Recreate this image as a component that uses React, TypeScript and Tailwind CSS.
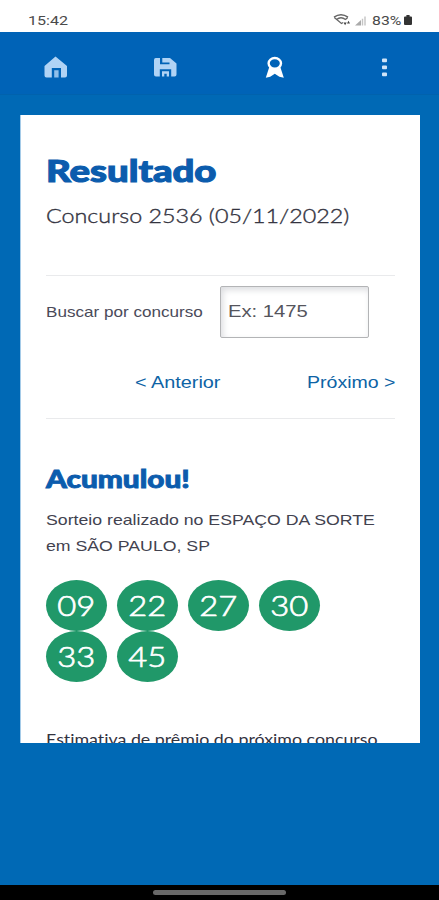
import clsx from "clsx";

const numbers = ["09", "22", "27", "30", "33", "45"];

// Text drawn wider than the font's natural proportions
function Wide({ className, children }: { className?: string; children: React.ReactNode }) {
  return <span className={clsx("inline-block origin-left whitespace-nowrap", className)}>{children}</span>;
}

function StatusBar() {
  return (
    <div className="flex h-[32px] shrink-0 items-start bg-white pt-[12px] font-['Roboto',sans-serif] text-[13.5px] leading-[17px] text-[#4a4a4a]">
      <Wide className="ml-[28px] w-[305px] scale-x-[1.19]">15:42</Wide>
      {/* Wifi, signal */}
      <svg className="mt-[1px] h-[14px] w-[18px] shrink-0" viewBox="0 0 18 14" fill="none" stroke="#666">
        <path d="M1 4.2Q8 -.8 15 4.2" strokeWidth="1.5" />
        <path d="M3.5 6.5Q8 3 12.5 6.5" strokeWidth="1.3" />
        <path d="M1.3 4.5 8.5 10.5 10 9.4M14.7 4.5l-2.5 2.2" strokeWidth="1.3" />
        <path d="M10.5 9.5h3.2l-1.6 2.7zM14 10.5h3l-1.5-2.7z" fill="#444" stroke="none" />
      </svg>
      <svg className="mt-[2px] ml-[3px] h-[12px] w-[13px] shrink-0" viewBox="0 0 13 12">
        <path d="M1 11.5 7 6v5.5z" fill="#aaa" />
        <path d="M8.5 11.5V4.7M11 11.5V2.5" stroke="#c4c4c4" strokeWidth="1.4" />
      </svg>
      <Wide className="ml-[5px] w-[31px] scale-x-[1.17]">83%</Wide>
      <svg className="mt-[3px] ml-[1px] h-[10px] w-[8px] shrink-0" viewBox="0 0 8 10" fill="#333">
        <path d="M2.4 0h3.2v1.5H7q1 0 1 1V9q0 1-1 1H1Q0 10 0 9V2.5q0-1 1-1h1.4z" />
      </svg>
    </div>
  );
}

function Toolbar() {
  return (
    <nav className="grid h-[63px] shrink-0 grid-cols-4 border-b border-[#0162ad] bg-[#0063b7] pt-[24px]">
      <svg className="mx-auto h-[22px] w-[24px] translate-x-[0.5px]" viewBox="0 0 24 22" fill="#b0d3f5">
        <path d="M12 0.5 23.5 10v9.5q0 2-2 2H17.5V12H8.3V21.5H3q-2 0-2-2V10z" />
        <path d="M10.7 14.2h4.4v7.3h-4.4z" fill="#8fbfea" />
      </svg>
      <svg className="mx-auto h-[22px] w-[24px]" viewBox="0 0 24 22" fill="#b0d3f5">
        <path d="M2.8 2H7v6.2h9.5V6.5H9.3V2H17l6.5 5.5v11q0 2-2 2h-3.3V13.2H6.8v7.3H3q-2 0-2-2V4q0-2 1.8-2z" />
        <path d="M9 15.2h7v5.3h-2.3v-2.7h-2.4v2.7H9z" />
      </svg>
      <svg className="mx-auto h-[22px] w-[20px] translate-x-[1px]" viewBox="0 0 20 22" fill="none">
        <path d="M4.3 11 .8 21.7l4.4-1 4.6-3 4.6 3 4.4 1L15.3 11z" fill="#fff" />
        <ellipse cx="9.8" cy="7.3" rx="6.2" ry="5.3" fill="#0063b7" stroke="#fff" strokeWidth="2.4" />
      </svg>
      <svg className="mx-auto h-[22px] w-[6px] translate-x-[0.5px]" viewBox="0 0 6 22" fill="#cfe4f8">
        <rect x=".5" y="2.5" width="5" height="3.8" rx="1" />
        <rect x=".5" y="9.5" width="5" height="3.8" rx="1" />
        <rect x=".5" y="16.5" width="5" height="3.8" rx="1" />
      </svg>
    </nav>
  );
}

function Search() {
  return (
    <section className="h-[144px] border-y border-[#e9eaec]">
      <div className="flex items-center pt-[10px]">
        <Wide className="w-[174px] scale-x-[1.14] text-[15px] text-[#4a4a59]">Buscar por concurso</Wide>
        <div className="flex h-[52px] w-[149px] shrink-0 items-center rounded-[2px] border border-[#b3b4b6] bg-white pl-[7px] shadow-[inset_2px_3px_6px_#dcdde0]">
          <Wide className="scale-x-[1.19] text-[17px] text-[#55555c]">Ex: 1475</Wide>
        </div>
      </div>
      <div className="flex pt-[33px] pl-[89px] text-[16px] leading-[24px] text-[#0d63a5]">
        <Wide className="w-[172px] scale-x-[1.24]">&lt; Anterior</Wide>
        <Wide className="scale-x-[1.22]">Próximo &gt;</Wide>
      </div>
    </section>
  );
}

function Balls() {
  return (
    <ul className="mt-[21px] flex w-[290px] flex-wrap gap-x-[10px]">
      {numbers.map((number) => (
        <li key={number} className="flex h-[51px] w-[61px] items-center justify-center rounded-[50%] bg-[#209869] pb-[2px] font-['Lato',sans-serif] text-[28px] font-light text-white">
          <span className="scale-x-[1.17] [-webkit-text-stroke:0.7px]">{number}</span>
        </li>
      ))}
    </ul>
  );
}

export default function App() {
  return (
    <div className="flex h-[900px] w-[439px] flex-col overflow-hidden bg-[#0069b5] font-['Liberation_Sans',Arial,sans-serif]">
      <StatusBar />
      <Toolbar />
      <main className="mx-[20px] mt-[20px] h-[628px] w-[400px] shrink-0 overflow-hidden border-l border-[#a5cbe8] bg-white pr-[25px] pl-[25px]">
        <h1 className="mt-[35px] h-[40px] font-['Lato',sans-serif] text-[31px] leading-[40px] font-black text-[#0b5cad]">
          <Wide className="scale-x-[1.235] [-webkit-text-stroke:1.1px]">Resultado</Wide>
        </h1>
        <p className="mt-[11px] mb-[44px] h-[30px] font-['Lato',sans-serif] text-[19.5px] leading-[30px] font-light text-[#33333f]">
          <Wide className="scale-x-[1.195] [-webkit-text-stroke:0.35px]">Concurso 2536 (05/11/2022)</Wide>
        </p>
        <Search />
        <h2 className="mt-[44px] h-[30px] font-['Lato',sans-serif] text-[25px] leading-[30px] font-black text-[#0b5cad]">
          <Wide className="scale-x-[1.19] [-webkit-text-stroke:0.9px]">Acumulou!</Wide>
        </h2>
        <p className="mt-[14px] text-[15px] leading-[26px] text-[#42424f]">
          <Wide className="block scale-x-[1.18]">Sorteio realizado no ESPAÇO DA SORTE</Wide>
          <Wide className="block scale-x-[1.18]">em SÃO PAULO, SP</Wide>
        </p>
        <Balls />
        <p className="mt-[45px] font-['Lato',sans-serif] text-[16px] leading-[24px] text-[#33333f] [font-variant-ligatures:none]">
          <Wide className="scale-x-[1.112]">Estimativa de prêmio do próximo concurso</Wide>
        </p>
      </main>
      {/* Gesture bar */}
      <div className="mt-auto flex h-[15px] shrink-0 items-center justify-center bg-black">
        <div className="h-[5px] w-[133px] rounded-full bg-[#686868]" />
      </div>
    </div>
  );
}
